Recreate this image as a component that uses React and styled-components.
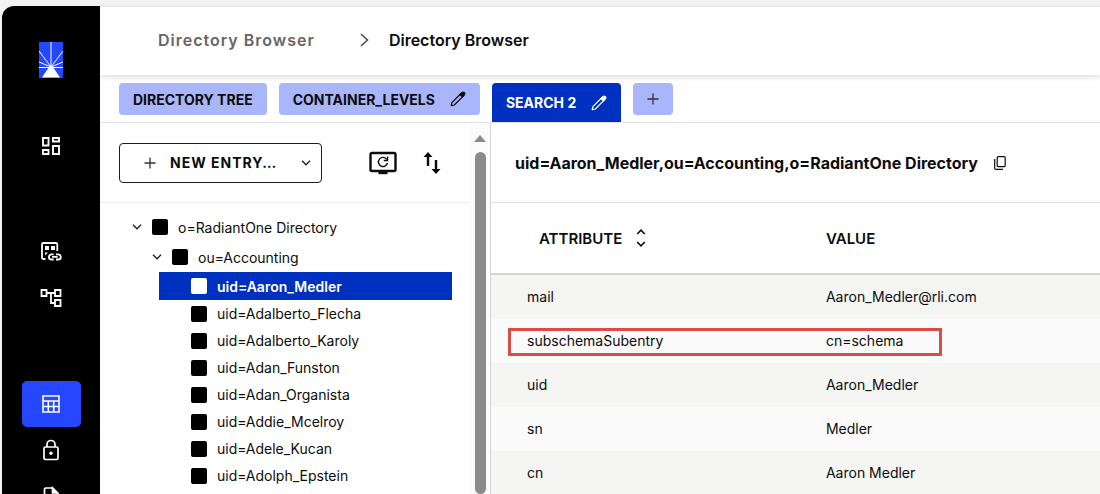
import React from 'react'
import styled, { createGlobalStyle, css } from 'styled-components'

const GlobalStyle = createGlobalStyle`
  * {
    box-sizing: border-box;
  }
  body {
    margin: 0;
    background: #f2f2f2;
    color: #0c0c0c;
    font-family: Inter, "Liberation Sans", sans-serif;
    font-size: 14px;
    overflow: hidden;
  }
  button {
    font-family: inherit;
    color: inherit;
    cursor: pointer;
  }
  svg {
    display: block;
    flex-shrink: 0;
  }
`

const people = [
  'uid=Aaron_Medler',
  'uid=Adalberto_Flecha',
  'uid=Adalberto_Karoly',
  'uid=Adan_Funston',
  'uid=Adan_Organista',
  'uid=Addie_Mcelroy',
  'uid=Adele_Kucan',
  'uid=Adolph_Epstein',
]

const attributes = [
  { name: 'mail', value: 'Aaron_Medler@rli.com' },
  { name: 'subschemaSubentry', value: 'cn=schema', marked: true },
  { name: 'uid', value: 'Aaron_Medler' },
  { name: 'sn', value: 'Medler' },
  { name: 'cn', value: 'Aaron Medler' },
]

const Logo = () => (
  <svg width="24" height="36" viewBox="0 0 24 36">
    <rect width="24" height="36" fill="#2447ff" />
    <g stroke="#fff" strokeWidth="1">
      <path d="M12 0V25M0 9L12 25L24 9M0 20L12 25L24 20M0 25.5H24" fill="none" />
    </g>
    <path d="M12 23L15 26.500L21 35.500H3L9 26.500Z" fill="#fff" />
  </svg>
)

const DashboardIcon = () => (
  <svg width="18" height="18" viewBox="0 0 18 18" fill="none" stroke="#fff" strokeWidth="1.9">
    <path d="M1 1h5.500v7.500H1zM11 1h6v3.500h-6zM11 9h6v8h-6zM1 13h5.500v4H1z" />
  </svg>
)

const LinkedTableIcon = () => (
  <svg width="21" height="20" viewBox="0 0 21 20" fill="none" stroke="#fff" strokeWidth="1.8">
    <path d="M16.300 9V2.500Q16.300 1 14.800 1H2.300Q1 1 1 2.300V15.800Q1 17 2.300 17H4.500" />
    <path d="M4 4h4v4H4zM10 4h4v4h-4zM4 10.500h3L4 13.500z" fill="#fff" stroke="none" />
    <path d="M12.700 12.300H10.500a2.600 2.600 0 0 0 0 5.200H12.700M15 12.300H17.200a2.600 2.600 0 0 1 0 5.200H15M11 14.900H16.700" />
  </svg>
)

const SchemaIcon = () => (
  <svg width="22" height="20" viewBox="0 0 22 20" fill="none" stroke="#fff" strokeWidth="1.8">
    <path d="M1.500 2H6.500V8H1.500zM15 2h5.500V8H15zM15 12h5.500v6H15zM7 5h8M11 5v10h4" />
  </svg>
)

const TableIcon = () => (
  <svg width="18" height="18" viewBox="0 0 18 18" fill="none" stroke="#fff" strokeWidth="1.600">
    <path d="M1 1h16v16H1zM1 6h16M1 11.500h16M6.300 6v11M11.700 6v11" />
  </svg>
)

const LockIcon = () => (
  <svg width="18" height="22" viewBox="0 0 18 22" fill="none" stroke="#fff" strokeWidth="1.700">
    <rect x="2" y="8" width="14" height="12.500" rx="1.500" />
    <path d="M5 8V5.500a4 4 0 0 1 8 0V8" />
    <circle cx="9" cy="14.200" r="1.700" fill="#fff" stroke="none" />
  </svg>
)

const FileIcon = () => (
  <svg width="18" height="20" viewBox="0 0 18 20" fill="none" stroke="#fff" strokeWidth="1.700">
    <path d="M2.500 3.300Q2.500 2 3.800 2H10.500L15.500 7V18H2.500z" />
    <path d="M10.500 2V7H15.500z" fill="#fff" />
  </svg>
)

const PencilIcon = () => (
  <svg width="16" height="16" viewBox="0 0 16 16" fill="none" stroke="currentColor" strokeWidth="1.200" strokeLinejoin="round">
    <path d="M1.200 14.600L1.900 11.600L11 2.500L13.400 4.900L4.300 14Z" />
    <path d="M10 3.500L12.400 5.900L14.500 3.800Q15.300 2.800 14.400 1.700Q13.200 .7 12.200 1.400Z" fill="currentColor" />
  </svg>
)

const PlusIcon = () => (
  <svg width="12" height="12" viewBox="0 0 12 12" fill="none" stroke="#333" strokeWidth="1.300">
    <path d="M6 .5V11.500M.5 6H11.500" />
  </svg>
)

const ChevronIcon = () => (
  <svg width="10" height="6" viewBox="0 0 10 6" fill="none" stroke="#1c1c1c" strokeWidth="1.300">
    <path d="M1 .8L5 4.800L9 .8" />
  </svg>
)

const CrumbIcon = () => (
  <svg width="9" height="14" viewBox="0 0 9 14" fill="none" stroke="#4a4a4a" strokeWidth="1.500">
    <path d="M1 1L7.500 7L1 13" />
  </svg>
)

const RefreshScreenIcon = () => (
  <svg width="28" height="24" viewBox="0 0 28 24" fill="none" stroke="#0c0c0c">
    <rect x="1.500" y="2" width="25" height="18" rx="1.500" strokeWidth="2.400" />
    <path d="M9.500 20h9v3.200h-9z" fill="#0c0c0c" stroke="none" />
    <path d="M17.800 8.300A4.600 4.600 0 1 0 18.500 12" strokeWidth="1.400" />
    <path d="M18.600 5.600V9.500H14.700" strokeWidth="1.300" />
  </svg>
)

const SwapIcon = () => (
  <svg width="18" height="22" viewBox="0 0 18 22" fill="#0c0c0c">
    <path d="M5 0L9.500 5H6.200V14H3.800V5H.5zM13 22L8.500 17H11.800V8H14.200V17H17.500z" />
  </svg>
)

const SortIcon = () => (
  <svg width="10" height="18" viewBox="0 0 10 18" fill="none" stroke="#0c0c0c" strokeWidth="1.600">
    <path d="M1.200 5L5 1.200L8.800 5M1.200 13L5 16.800L8.800 13" />
  </svg>
)

const CopyIcon = () => (
  <svg width="12" height="14" viewBox="0 0 12 14" fill="none" stroke="#0c0c0c" strokeWidth="1.200">
    <rect x="3.200" y=".6" width="8" height="10" rx="1" />
    <path d="M.7 3V12.200Q.7 13.300 1.800 13.300H9" />
  </svg>
)

export default function App() {
  return (
    <>
      <GlobalStyle />
      <Shell>
        <Sidebar>
          <LogoLink href="#" aria-label="Home"><Logo /></LogoLink>
          <NavGroup>
            <NavItem href="#" aria-label="Dashboard"><DashboardIcon /></NavItem>
          </NavGroup>
          <NavGroup>
            <NavItem href="#" aria-label="Data catalog"><LinkedTableIcon /></NavItem>
            <NavItem href="#" aria-label="Namespaces"><SchemaIcon /></NavItem>
          </NavGroup>
          <NavGroup>
            <NavItem href="#" aria-label="Directory Browser" $active><TableIcon /></NavItem>
            <NavItem href="#" aria-label="Security"><LockIcon /></NavItem>
            <NavItem href="#" aria-label="Reports"><FileIcon /></NavItem>
          </NavGroup>
        </Sidebar>
        <Main>
          <Header>
            <CrumbLink href="#">Directory Browser</CrumbLink>
            <CrumbIcon />
            <Crumb>Directory Browser</Crumb>
          </Header>
          <Tabs>
            <Tab>DIRECTORY TREE</Tab>
            <Tab>CONTAINER_LEVELS <PencilIcon /></Tab>
            <Tab $active>SEARCH 2 <PencilIcon /></Tab>
            <Tab aria-label="New tab"><PlusIcon /></Tab>
          </Tabs>
          <Content>
            <TreePanel>
              <TreeBody>
                <Toolbar>
                  <NewEntry>
                    <PlusIcon />
                    <span>NEW ENTRY…</span>
                    <ChevronIcon />
                  </NewEntry>
                  <IconButton aria-label="Refresh"><RefreshScreenIcon /></IconButton>
                  <IconButton aria-label="Sort"><SwapIcon /></IconButton>
                </Toolbar>
                <Tree>
                  <Node $level={0}><ChevronIcon /><Box />o=RadiantOne Directory</Node>
                  <Node $level={1}><ChevronIcon /><Box />ou=Accounting</Node>
                  {people.map((uid, i) => (
                    <Leaf key={uid} $selected={i === 0}><Box $light={i === 0} />{uid}</Leaf>
                  ))}
                </Tree>
              </TreeBody>
              <ScrollTrack>
                <ScrollArrow />
                <ScrollThumb />
              </ScrollTrack>
            </TreePanel>
            <Detail>
              <EntryBar>
                <EntryTitle>uid=Aaron_Medler,ou=Accounting,o=RadiantOne Directory</EntryTitle>
                <IconButton aria-label="Copy DN"><CopyIcon /></IconButton>
              </EntryBar>
              <Table>
                <thead>
                  <tr>
                    <Th $first><SortButton>ATTRIBUTE <SortIcon /></SortButton></Th>
                    <Th>VALUE</Th>
                  </tr>
                </thead>
                <tbody>
                  {attributes.map(({ name, value, marked }) => (
                    <Row key={name}>
                      <Td $first>{name}{marked && <Marker />}</Td>
                      <Td>{value}</Td>
                    </Row>
                  ))}
                </tbody>
              </Table>
            </Detail>
          </Content>
        </Main>
      </Shell>
    </>
  )
}

const Shell = styled.div`
  display: flex;
  height: 100vh;
  padding: 6px 0 0 2px;
`

const Sidebar = styled.nav`
  display: flex;
  flex-direction: column;
  align-items: center;
  flex: 0 0 98px;
  background: #000;
  border-radius: 12px 0 0 0;
  overflow: hidden;
`

const LogoLink = styled.a`
  padding-top: 36px;
`

const NavGroup = styled.div`
  display: flex;
  flex-direction: column;
  padding-top: 45px;

  & + & {
    padding-top: 60px;
  }
`

const NavItem = styled.a`
  display: flex;
  align-items: center;
  justify-content: center;
  width: 59px;
  height: 46px;
  flex-shrink: 0;
  border-radius: 5px;
  background: ${({ $active }) => ($active ? '#2447ff' : 'transparent')};
`

const Main = styled.main`
  display: flex;
  flex-direction: column;
  flex: 1;
  min-width: 0;
  background: #fff;
`

const Header = styled.header`
  display: flex;
  align-items: center;
  gap: 20px;
  height: 69px;
  flex-shrink: 0;
  padding: 0 0 2px 58px;
  font-size: 16px;
  font-weight: 600;
  border-top: 1px solid #e8e8e8;
  box-shadow: 0 2px 6px rgba(0, 0, 0, 0.14);
  z-index: 1;
`

const CrumbLink = styled.a`
  color: #666;
  letter-spacing: 1px;
  text-decoration: none;
  margin-right: 25px;
`

const Crumb = styled.span`
  color: #0c0c0c;
`

const Tabs = styled.div`
  display: flex;
  gap: 12px;
  height: 48px;
  flex-shrink: 0;
  padding: 8px 19px 0;
  border-bottom: 1px solid #e2e2e2;
`

const Tab = styled.button`
  display: flex;
  align-items: center;
  gap: 15px;
  height: 32px;
  padding: 0 14px;
  border: 0;
  border-radius: 4px;
  background: #a9b6fc;
  font-size: 14px;
  font-weight: 700;

  ${({ $active }) =>
    $active &&
    css`
      height: 39px;
      border-radius: 4px 4px 0 0;
      background: #0030c0;
      color: #fff;
    `}
`

const Content = styled.div`
  display: flex;
  flex: 1;
  min-height: 0;
`

const TreePanel = styled.aside`
  display: flex;
  flex: 0 0 391px;
  border-right: 1px solid #d4d4d4;
`

const TreeBody = styled.div`
  flex: 1;
  min-width: 0;
  overflow: hidden;
`

const Toolbar = styled.div`
  display: flex;
  align-items: center;
  height: 80px;
  padding-left: 19px;
  border-bottom: 1px solid #eee;
`

const NewEntry = styled.button`
  display: flex;
  align-items: center;
  gap: 14px;
  width: 203px;
  height: 40px;
  padding: 0 10px 0 24px;
  margin-right: 47px;
  border: 1px solid #1c1c1c;
  border-radius: 4px;
  background: #fff;
  font-size: 14px;
  font-weight: 700;

  span {
    flex: 1;
    text-align: left;
    letter-spacing: 1px;
    white-space: nowrap;
  }
`

const IconButton = styled.button`
  padding: 0;
  border: 0;
  background: none;

  & + & {
    margin-left: 26px;
  }
`

const Tree = styled.ul`
  margin: 0;
  padding: 9px 18px 0 32px;
  list-style: none;
`

const Node = styled.li`
  display: flex;
  align-items: center;
  gap: 10px;
  height: 30px;
  padding-left: ${({ $level }) => $level * 20}px;
`

const Leaf = styled.li`
  display: flex;
  align-items: center;
  gap: 10px;
  height: 27px;
  margin-left: 27px;
  padding-left: 32px;

  ${({ $selected }) =>
    $selected &&
    css`
      height: 28px;
      background: #0030c0;
      color: #fff;
      font-weight: 600;
    `}
`

const Box = styled.span`
  width: 16px;
  height: 16px;
  border-radius: 2px;
  background: ${({ $light }) => ($light ? '#fff' : '#000')};
`

const ScrollTrack = styled.div`
  display: flex;
  flex-direction: column;
  align-items: center;
  gap: 10px;
  width: 20px;
  padding-top: 12px;
  background: #fcfcfc;
`

const ScrollArrow = styled.span`
  border: 6px solid transparent;
  border-top: 0;
  border-bottom: 7px solid #8b8b8b;
`

const ScrollThumb = styled.span`
  flex: 1;
  width: 11px;
  border-radius: 6px;
  background: #8b8b8b;
`

const Detail = styled.section`
  flex: 1;
  min-width: 0;
  overflow: hidden;
`

const EntryBar = styled.div`
  display: flex;
  align-items: center;
  gap: 16px;
  height: 80px;
  padding-left: 24px;
  border-bottom: 1px solid #e2e2e2;
`

const EntryTitle = styled.h1`
  margin: 0;
  font-size: 16px;
  font-weight: 700;
  white-space: nowrap;
`

const Table = styled.table`
  width: 100%;
  table-layout: fixed;
  border-spacing: 0;
`

const Th = styled.th`
  width: ${({ $first }) => ($first ? '55%' : 'auto')};
  height: 72px;
  padding: 0 0 0 ${({ $first }) => ($first ? '48px' : '0')};
  border-bottom: 2px solid #d4d4d4;
  font-size: 15px;
  font-weight: 600;
  text-align: left;
`

const SortButton = styled.button`
  display: flex;
  align-items: center;
  gap: 14px;
  padding: 0;
  border: 0;
  background: none;
  font-size: inherit;
  font-weight: inherit;
`

const Row = styled.tr`
  position: relative;
  background: #fafafa;

  &:nth-child(odd) {
    background: #f5f5f4;
  }
`

const Td = styled.td`
  height: 44px;
  padding: 0 0 2px ${({ $first }) => ($first ? '36px' : '0')};
`

const Marker = styled.span`
  position: absolute;
  top: 9px;
  left: 17px;
  width: 434px;
  height: 28px;
  border: 3px solid #dc4c47;
`
